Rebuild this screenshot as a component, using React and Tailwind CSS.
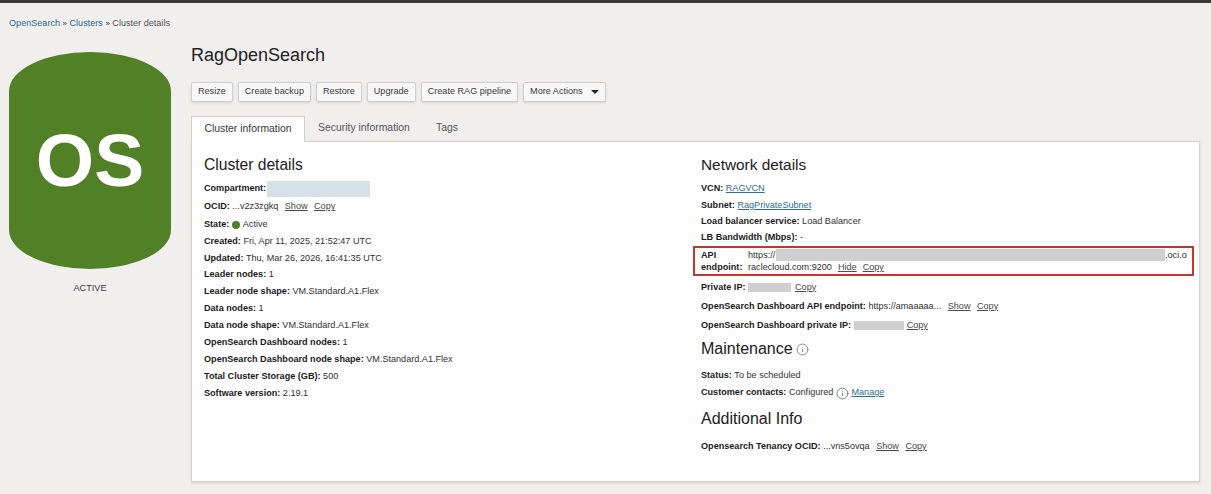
import { Info } from 'lucide-react'

const font = { fontFamily: '"Liberation Sans", Arial, sans-serif' }

const actions = ['Resize', 'Create backup', 'Restore', 'Upgrade', 'Create RAG pipeline']

const clusterRows = [
  ['Created:', 'Fri, Apr 11, 2025, 21:52:47 UTC'],
  ['Updated:', 'Thu, Mar 26, 2026, 16:41:35 UTC'],
  ['Leader nodes:', '1'],
  ['Leader node shape:', 'VM.Standard.A1.Flex'],
  ['Data nodes:', '1'],
  ['Data node shape:', 'VM.Standard.A1.Flex'],
  ['OpenSearch Dashboard nodes:', '1'],
  ['OpenSearch Dashboard node shape:', 'VM.Standard.A1.Flex'],
  ['Total Cluster Storage (GB):', '500'],
  ['Software version:', '2.19.1'],
]

function Row({ label, children, className = 'h-[17px]' }) {
  return (
    <div className={`flex items-center whitespace-pre ${className}`}>
      <b className="font-bold text-[#1c1c1c]">{label}</b>
      <span> </span>
      {children}
    </div>
  )
}

function Action({ children, className = 'ml-[6.5px]' }) {
  return <a className={`underline text-[#4a4a4a] ${className}`}>{children}</a>
}

function Link({ children }) {
  return <a className="underline text-[#2f6f96]">{children}</a>
}

function Heading({ children, className = '' }) {
  return <h2 className={`leading-5 text-[#222] ${className}`}>{children}</h2>
}

export default function App() {
  return (
    <div style={font} className="h-[494px] w-[1211px] overflow-hidden bg-[#f0efee] text-[9.1px] text-[#333]">
      <div className="h-[3px] bg-[#3b3733]" />

      <div className="h-[49px] pl-[9px] pt-[14px] text-[9.1px] leading-3">
        <a className="text-[#2b6a92]">OpenSearch</a>
        <span className="mx-[2.5px] text-[8px]">»</span>
        <a className="text-[#2b6a92]">Clusters</a>
        <span className="mx-[2.5px] text-[8px]">»</span>
        <span className="text-[#555]">Cluster details</span>
      </div>

      <div className="flex pl-[9px]">
        <div className="w-[182px] shrink-0">
          <div className="flex h-[217px] w-[162px] items-center justify-center rounded-[50%/18%] bg-[#518026] text-[75px] font-bold text-white">
            OS
          </div>
          <div className="mt-[13px] w-[162px] text-center text-[9.2px] text-[#3a3a3a]">ACTIVE</div>
        </div>

        <div className="w-[1009px]">
          <h1 className="h-[30px] text-[18px] leading-[6px] text-[#222]">RagOpenSearch</h1>

          <div className="flex items-center gap-[5px]">
            {actions.map(a => (
              <button key={a} className="h-[20px] rounded-[2px] border border-[#cfcfcf] bg-[#f7f7f7] px-[6px] text-[9.1px] text-[#3c3c3c] shadow-sm">
                {a}
              </button>
            ))}
            <button className="flex h-[20px] items-center gap-[7px] rounded-[2px] border border-[#cfcfcf] bg-[#f7f7f7] px-[6px] text-[9.1px] text-[#3c3c3c] shadow-sm">
              More Actions
              <span className="ml-[1px] h-0 w-0 border-x-[4px] border-t-[4px] border-x-transparent border-t-[#222]" />
            </button>
          </div>

          <div className="relative z-10 mt-[14px] flex h-[26px] items-end text-[10.4px] text-[#555]">
            <div className="flex h-[26px] w-[114px] items-center justify-center border border-b-0 border-[#cfcfcf] bg-[#fdfdfd] pb-[1px] text-[#3a3a3a]">
              Cluster information
            </div>
            <div className="flex h-[26px] w-[118px] items-center justify-center pb-[2px]">Security information</div>
            <div className="flex h-[26px] w-[48px] items-center justify-center pb-[2px]">Tags</div>
          </div>

          <div className="-mt-px grid h-[341px] grid-cols-[497px_1fr] border border-[#d4d4d4] bg-[#fdfdfd] pl-[12px] pt-[13px] shadow-sm">
            <section>
              <Heading className="mb-[5px] text-[15.6px]">Cluster details</Heading>
              <Row label="Compartment:" className="h-[18px]">
                <span className="-ml-[2px] h-[16px] w-[103px] bg-[#d5e1e8]" />
              </Row>
              <Row label="OCID:" className="h-[18px]">
                <span>...v2z3zgkq</span>
                <Action>Show</Action>
                <Action>Copy</Action>
              </Row>
              <Row label="State:">
                <span className="mr-[3px] h-[8px] w-[8px] rounded-full bg-[#518026]" />
                <span>Active</span>
              </Row>
              {clusterRows.map(([label, value]) => (
                <Row key={label} label={label} className="h-[16.9px]">
                  <span>{value}</span>
                </Row>
              ))}
            </section>

            <section>
              <Heading className="mb-[6px] text-[15.4px]">Network details</Heading>
              <Row label="VCN:" className="h-[16.5px]">
                <Link>RAGVCN</Link>
              </Row>
              <Row label="Subnet:" className="h-[16.5px]">
                <Link>RagPrivateSubnet</Link>
              </Row>
              <Row label="Load balancer service:" className="h-[16.5px]">
                <span>Load Balancer</span>
              </Row>
              <Row label="LB Bandwidth (Mbps):" className="h-[15.5px]">
                <span>-</span>
              </Row>

              <div className="-ml-[8px] flex h-[30px] w-[501px] border-2 border-[#c0392b] pl-[6px] pt-[1px] leading-[12px]">
                <b className="w-[47px] shrink-0 font-bold text-[#1c1c1c]">API endpoint:</b>
                <div className="w-[440px] leading-[12px]">
                  <div className="flex">
                    <span className="w-[28px]">https://</span>
                    <span className="h-[12px] w-[389px] bg-[#cfcfcf]" />
                    <span>.oci.o</span>
                  </div>
                  <div className="flex">
                    <span>raclecloud.com:9200</span>
                    <Action className="ml-[6px]">Hide</Action>
                    <Action className="ml-[6px]">Copy</Action>
                  </div>
                </div>
              </div>

              <Row label="Private IP:" className="mt-[2px] h-[19px]">
                <span className="h-[9px] w-[43px] bg-[#cfcfcf]" />
                <Action className="ml-[4px]">Copy</Action>
              </Row>
              <Row label="OpenSearch Dashboard API endpoint:" className="h-[19px]">
                <span>https://amaaaaa...</span>
                <Action>Show</Action>
                <Action>Copy</Action>
              </Row>
              <Row label="OpenSearch Dashboard private IP:" className="h-[19px]">
                <span className="h-[9px] w-[50px] bg-[#cfcfcf]" />
                <Action className="ml-[3px]">Copy</Action>
              </Row>

              <Heading className="mt-[4px] mb-[9px] flex items-center gap-[3px] text-[16px]">
                Maintenance
                <Info size={13} strokeWidth={1.2} className="text-[#555]" />
              </Heading>
              <Row label="Status:" className="h-[16px]">
                <span>To be scheduled</span>
              </Row>
              <Row label="Customer contacts:" className="h-[18px]">
                <span>Configured</span>
                <Info size={13} strokeWidth={1.2} className="mx-[2.5px] text-[#444]" />
                <Link>Manage</Link>
              </Row>

              <Heading className="mt-[7px] mb-[9px] text-[16px]">Additional Info</Heading>
              <Row label="Opensearch Tenancy OCID:">
                <span>...vns5ovqa</span>
                <Action>Show</Action>
                <Action>Copy</Action>
              </Row>
            </section>
          </div>
        </div>
      </div>
    </div>
  )
}
